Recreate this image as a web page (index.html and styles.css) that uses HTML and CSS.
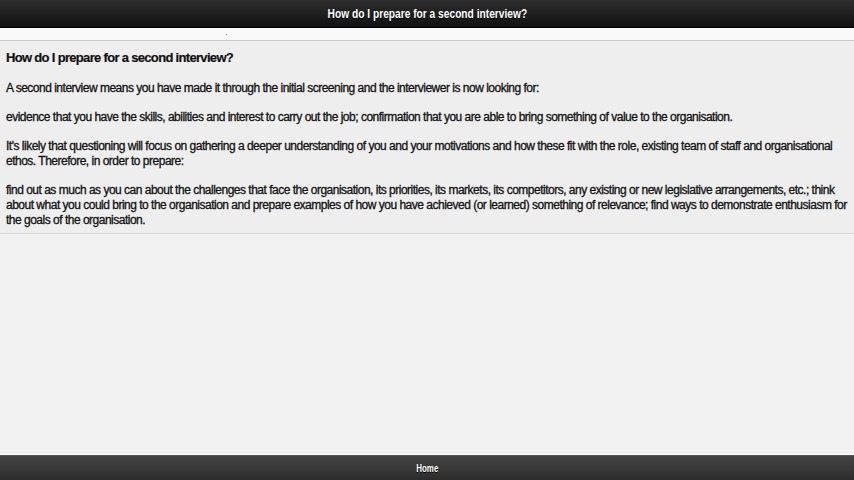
FILE: index.html
```html
<!DOCTYPE html>
<html lang="en">
<head>
<meta charset="utf-8">
<title>How do I prepare for a second interview?</title>
<link rel="stylesheet" href="styles.css">
</head>
<body>
<div class="page">
  <header class="topbar"><h1 class="topbar-title">How do I prepare for a second interview?</h1></header>
  <div class="strip"><span class="dot"></span></div>
  <section class="article">
    <h2 class="article-title">How do I prepare for a second interview?</h2>
    <p>A second interview means you have made it through the initial screening and the interviewer is now looking for:</p>
    <p>evidence that you have the skills, abilities and interest to carry out the job; confirmation that you are able to bring something of value to the organisation.</p>
    <p>It's likely that questioning will focus on gathering a deeper understanding of you and your motivations and how these fit with the role, existing team of staff and organisational ethos. Therefore, in order to prepare:</p>
    <p>find out as much as you can about the challenges that face the organisation, its priorities, its markets, its competitors, any existing or new legislative arrangements, etc.; think about what you could bring to the organisation and prepare examples of how you have achieved (or learned) something of relevance; find ways to demonstrate enthusiasm for the goals of the organisation.</p>
  </section>
  <div class="filler"></div>
  <footer class="footbar"><span class="foot-link">Home</span></footer>
</div>
</body>
</html>
```
FILE: styles.css
```css
html, body { margin: 0; padding: 0; height: 100%; }
body { font-family: "Liberation Sans", Arial, sans-serif; background: #f2f2f2; color: #111; }
.page { display: flex; flex-direction: column; height: 480px; }
.topbar { height: 28px; background: linear-gradient(#2e2e2e, #111); display: flex; align-items: center; justify-content: center; border-bottom: 1px solid #000; box-sizing: border-box; }
.topbar-title { margin: 0; font-size: 12px; font-weight: bold; color: #fff; text-shadow: 0 1px 0 #000; display: inline-block; transform: scaleX(0.85); }
.strip { height: 12px; background: #f9f9f9; border-bottom: 1px solid #ccc; position: relative; }
.dot { position: absolute; left: 226px; top: 6px; width: 1px; height: 1px; background: #888; }
.article { background: #eee; border-bottom: 1px solid #d8d8d8; padding: 9px 2px 5px 6px; font-size: 12px; line-height: 15px; letter-spacing: -0.5px; -webkit-text-stroke: 0.3px #111; }
.article-title { margin: 0 0 15px; font-size: 13px; line-height: 16px; font-weight: bold; letter-spacing: -0.68px; -webkit-text-stroke: 0.2px #111; }
.article p { margin: 0 0 14px; }
.article p:last-child { margin-bottom: 0; }
.filler { flex: 1; background: #f2f2f2; border-bottom: 1px solid #fff; }
.footbar { height: 24px; background: linear-gradient(#444, #2c2c2c); border-top: 1px solid #555; display: flex; align-items: center; justify-content: center; }
.foot-link { color: #fff; font-size: 11px; font-weight: bold; text-shadow: 0 1px 0 #000; display: inline-block; transform: scaleX(0.72); }
```
